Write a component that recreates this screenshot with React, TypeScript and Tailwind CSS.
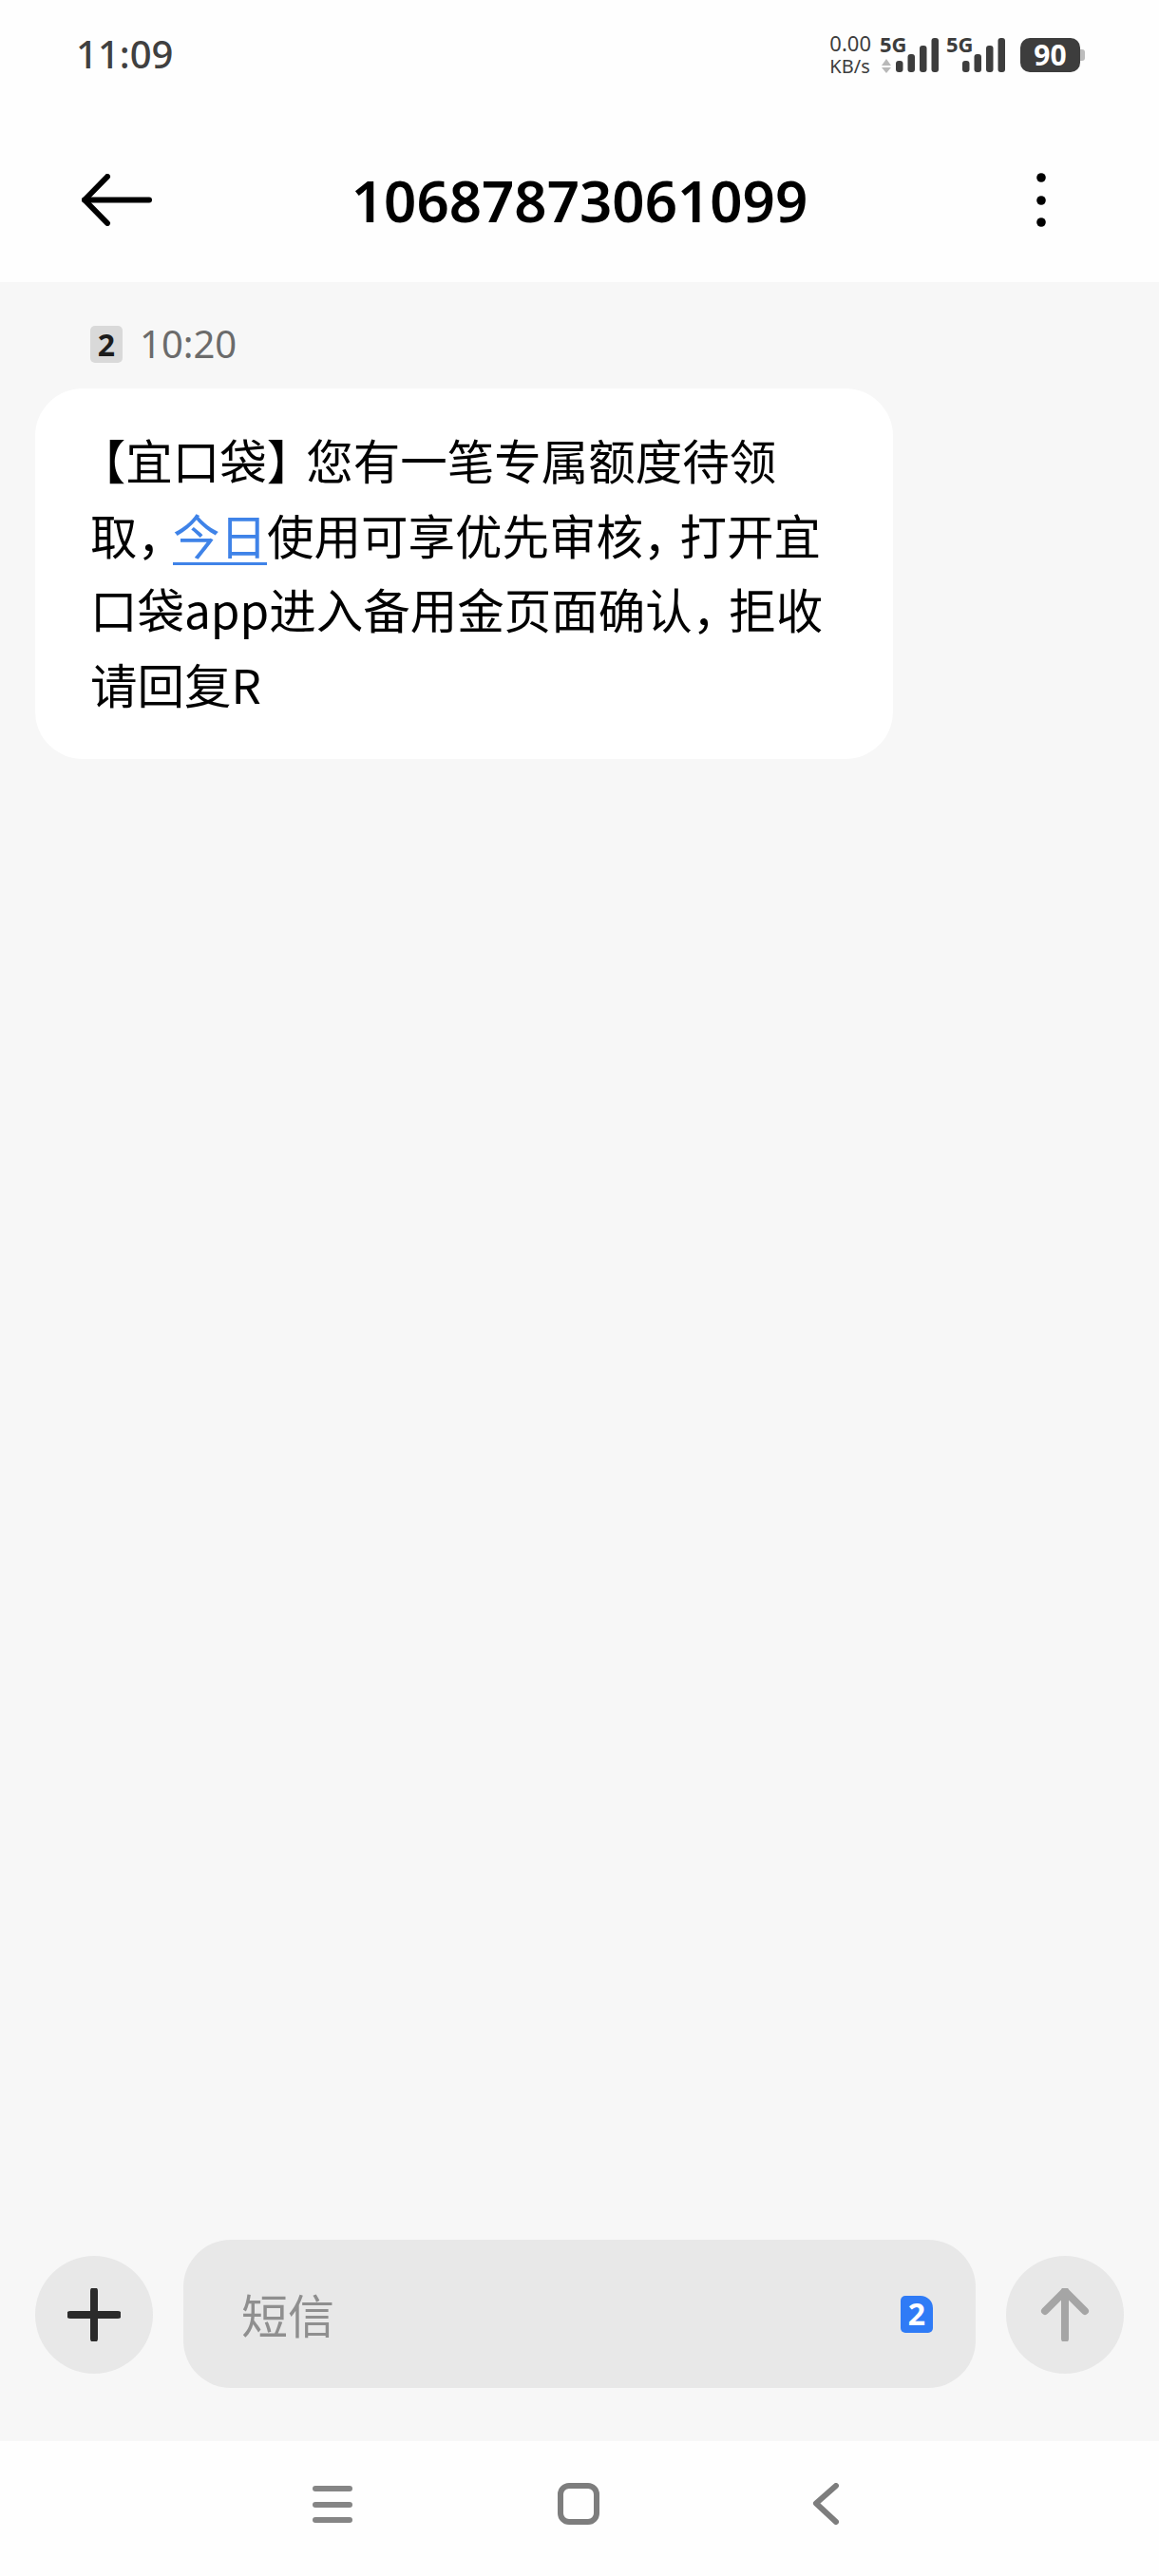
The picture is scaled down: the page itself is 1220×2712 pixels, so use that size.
const sans = { fontFamily: '"Noto Sans", "Noto Sans CJK SC", sans-serif' };
const cjk = { fontFamily: '"Noto Sans CJK SC", sans-serif' };

function Signal({ withArrows }: { withArrows?: boolean }) {
  return (
    <div className="relative h-[40px] w-[61px]">
      <span className="absolute left-[-1px] top-[-6px] text-[22px] font-bold leading-[24px] text-[#3d3d3d]">
        5G
      </span>
      <svg width="61" height="40" viewBox="0 0 61 40" className="absolute left-0 top-0">
        {withArrows && (
          <g fill="#b8b8b8">
            <path d="M1 29 L6 22 L11 29 Z" />
            <path d="M1 31 L11 31 L6 37 Z" />
          </g>
        )}
        <rect x="16" y="24" width="7.5" height="12" rx="3" fill="#3d3d3d" />
        <rect x="28.5" y="17" width="7.5" height="19" rx="3" fill="#3d3d3d" />
        <rect x="41" y="8" width="7.5" height="28" rx="3" fill="#3d3d3d" />
        <rect x="53.5" y="0" width="7.5" height="36" rx="3" fill="#3d3d3d" />
      </svg>
    </div>
  );
}

function StatusBar() {
  return (
    <div className="flex h-[80px] items-start justify-between bg-[#fefefe] pl-[80px] pr-[78px] pt-[40px]" style={sans}>
      <span className="mt-[-8px] text-[40px] font-medium leading-[50px] text-[#404040]">11:09</span>
      <div className="flex items-start text-[#3d3d3d]">
        <div className="mr-[10px] mt-[-7px] flex flex-col text-[22px] leading-[25px]">
          <span>0.00</span>
          <span className="text-[20px] leading-[24px]">KB/s</span>
        </div>
        <Signal withArrows />
        <div className="ml-[9px]">
          <Signal />
        </div>
        <div className="ml-[16px] flex items-center">
          <div className="flex h-[36px] w-[63px] items-center justify-center rounded-[10px] bg-[#3d3d3d] text-[30px] font-bold leading-none text-white">
            90
          </div>
          <div className="h-[12px] w-[5px] rounded-r-[3px] bg-[#bdbdbd]" />
        </div>
      </div>
    </div>
  );
}

function Header() {
  return (
    <div className="relative flex h-[217px] items-center justify-center bg-[#fefefe] pt-[46px]">
      <svg width="75" height="55" viewBox="0 0 75 55" className="absolute left-[86px] top-[103px]" fill="none" stroke="#000" strokeWidth="6" strokeLinecap="round" strokeLinejoin="round">
        <path d="M27 3 L3 27.5 L27 52" />
        <path d="M3 27.5 H71" />
      </svg>
      <h1 className="mt-[-2px] text-[60px] font-semibold leading-none text-black" style={sans}>
        10687873061099
      </h1>
      <svg width="12" height="60" viewBox="0 0 12 60" className="absolute left-[1090px] top-[101px]" fill="#000">
        <circle cx="6" cy="6" r="4.8" />
        <circle cx="6" cy="30" r="4.8" />
        <circle cx="6" cy="53" r="4.8" />
      </svg>
    </div>
  );
}

function MessageBubble() {
  return (
    <div className="mt-[27px] w-[903px] rounded-[50px] bg-white pb-[40px] pl-[58px] pt-[36px] text-[49.5px] leading-[78.5px] text-black" style={cjk}>
      <span className="ml-[12.5px] [font-feature-settings:'halt']">【</span>宜口袋<span className="mr-[16.75px] [font-feature-settings:'halt']">】</span>您有一笔专属额度待领
      <br />
      取<span className="mr-[12.75px] [font-feature-settings:'halt']">，</span>
      <span className="text-[#3f83e8] underline decoration-[3px] underline-offset-[8px]">今日</span>使用可享优先审核<span className="mr-[13.75px] [font-feature-settings:'halt']">，</span>打开宜
      <br />
      口袋app进入备用金页面确认<span className="mr-[13.75px] [font-feature-settings:'halt']">，</span>拒收
      <br />
      请回复R
    </div>
  );
}

function Composer() {
  return (
    <div className="flex h-[212px] shrink-0 items-start gap-[32px] bg-[#f7f7f7] px-[37px]">
      <button className="mt-[17px] flex h-[124px] w-[124px] shrink-0 items-center justify-center rounded-full bg-[#e8e8e8]">
        <svg width="56" height="56" viewBox="0 0 56 56" fill="none" stroke="#2b2b2b" strokeWidth="8" strokeLinecap="round">
          <path d="M28 3 V53" />
          <path d="M3 28 H53" />
        </svg>
      </button>
      <div className="flex h-[156px] w-[834px] shrink-0 items-center justify-between rounded-[50px] bg-[#e8e8e8] pl-[61px] pr-[45px]">
        <span className="text-[49px] text-[#8f8f8f]" style={cjk}>短信</span>
        <div className="relative flex h-[39px] w-[34px] items-center justify-center rounded-[5px] rounded-tr-[13px] bg-[#2f7bf6] text-[32px] font-bold leading-none text-white" style={sans}>
          2
        </div>
      </div>
      <button className="mt-[17px] flex h-[124px] w-[124px] shrink-0 items-center justify-center rounded-full bg-[#e8e8e8]">
        <svg width="56" height="56" viewBox="0 0 56 56" fill="none" stroke="#a5a5a5" strokeWidth="8" strokeLinecap="round" strokeLinejoin="round">
          <path d="M28 3 V53" />
          <path d="M7 24 L28 3 L49 24" />
        </svg>
      </button>
    </div>
  );
}

function NavBar() {
  return (
    <div className="flex h-[142px] shrink-0 items-start bg-[#fefefe] pl-[329px] pt-[44px]">
      <svg width="42" height="46" viewBox="0 0 42 46" fill="none" stroke="#858585" strokeWidth="6" strokeLinecap="round">
        <path d="M3 6 H39" />
        <path d="M3 23 H39" />
        <path d="M3 39 H39" />
      </svg>
      <svg width="44" height="46" viewBox="0 0 44 46" fill="none" stroke="#7d7d7d" strokeWidth="6" className="ml-[216px]">
        <rect x="3" y="3" width="38" height="38" rx="9" />
      </svg>
      <svg width="30" height="46" viewBox="0 0 30 46" fill="none" stroke="#7d7d7d" strokeWidth="6" strokeLinecap="round" strokeLinejoin="round" className="ml-[224px]">
        <path d="M25 3 L4 21.5 L25 41" />
      </svg>
    </div>
  );
}

export default function App() {
  return (
    <div className="flex h-[2712px] w-[1220px] flex-col overflow-hidden bg-[#f7f7f7]">
      <StatusBar />
      <Header />
      <main className="flex-1 pl-[37px] pt-[46px]">
        <div className="flex items-center pl-[58px]">
          <span className="flex h-[39px] w-[34px] items-center justify-center rounded-[5px] bg-[#d9d9d9] text-[32px] font-bold leading-none text-[#1c1c1c]" style={sans}>
            2
          </span>
          <span className="ml-[18px] mt-[-2px] text-[40px] leading-[39px] text-[#6b6b6b]" style={sans}>10:20</span>
        </div>
        <MessageBubble />
      </main>
      <Composer />
      <NavBar />
    </div>
  );
}
